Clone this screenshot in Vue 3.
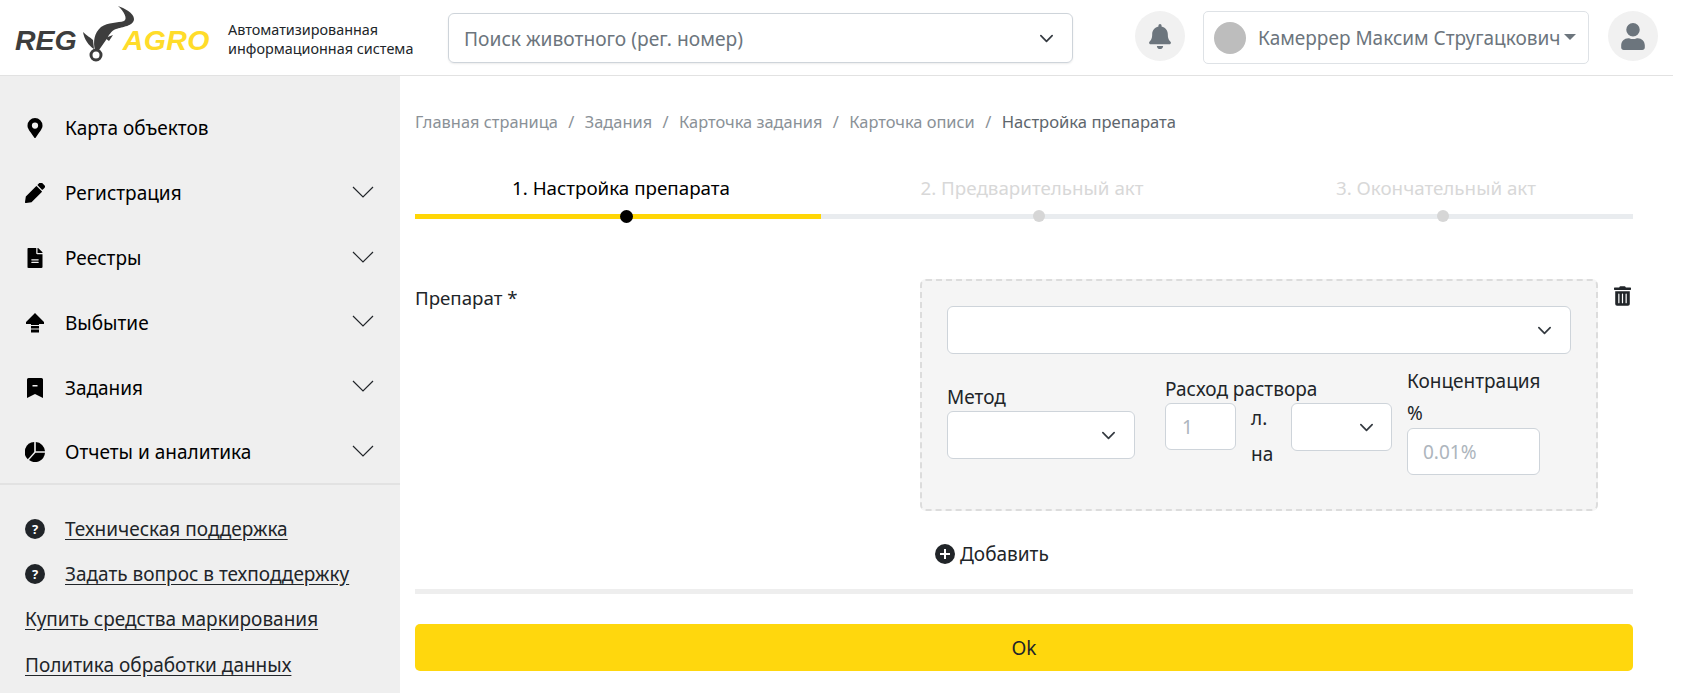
<script setup>
const menu = [
  { title: 'Карта объектов', icon: 'pin', arrow: false },
  { title: 'Регистрация', icon: 'pencil', arrow: true },
  { title: 'Реестры', icon: 'file', arrow: true },
  { title: 'Выбытие', icon: 'up', arrow: true },
  { title: 'Задания', icon: 'mark', arrow: true },
  { title: 'Отчеты и аналитика', icon: 'pie', arrow: true },
]
const crumbs = ['Главная страница', 'Задания', 'Карточка задания', 'Карточка описи']
const steps = ['1. Настройка препарата', '2. Предварительный акт', '3. Окончательный акт']
</script>

<template>
  <div class="page">
    <header class="top">
      <div class="logo">
        <span class="logo-reg">REG</span>
        <svg class="logo-bull" viewBox="0 0 60 70" width="60" height="70">
          <path d="M40 6C46 8 56 13 56 19C56 26 44 27 38 29C33 31 31 35 28 40L21 50L17 50C15 42 16 33 23 27C30 22 40 23 46 21C50 19 46 11 40 6z" fill="#3d3d3d"/>
          <path d="M5 32C9 36 12 37 15 40L16 49C11 46 6 39 5 32z" fill="#3d3d3d"/>
          <path d="M27 38L35 35L31 41z" fill="#3d3d3d"/>
          <circle cx="18" cy="55" r="5" fill="#fff" stroke="#3d3d3d" stroke-width="3"/>
        </svg>
        <span class="logo-agro">AGRO</span>
      </div>
      <div class="logo-text">Автоматизированная<br>информационная система</div>
      <div class="search">
        <span>Поиск животного (рег. номер)</span>
        <svg class="chev" viewBox="0 0 16 16" width="15" height="15"><path d="M2 5l6 6 6-6" fill="none" stroke="#343a40" stroke-width="1.800" stroke-linecap="round" stroke-linejoin="round"/></svg>
      </div>
      <div class="round bell">
        <svg viewBox="0 0 448 512" width="22" height="25"><path fill="#6c757d" d="M224 512c35 0 64-29 64-64H160c0 35 29 64 64 64zm215-150c-19-21-55-52-55-154 0-78-54-140-128-155V32a32 32 0 1 0-64 0v21C118 68 64 130 64 208c0 102-36 133-55 154-6 6-9 14-9 22 0 16 13 32 32 32h384c19 0 32-16 32-32 0-8-3-16-9-22z"/></svg>
      </div>
      <div class="user">
        <span class="avatar"></span>
        <span class="user-name">Камеррер Максим Стругацкович</span>
        <span class="caret"></span>
      </div>
      <div class="round profile">
        <svg viewBox="0 0 448 512" width="24" height="27"><path fill="#6c757d" d="M224 256a128 128 0 1 0 0-256 128 128 0 0 0 0 256zm90 32h-17a174 174 0 0 1-146 0h-17C60 288 0 348 0 422v42c0 27 21 48 48 48h352c27 0 48-21 48-48v-42c0-74-60-134-134-134z"/></svg>
      </div>
    </header>

    <div class="body">
      <aside class="side">
        <nav class="menu">
          <div v-for="m in menu" :key="m.title" class="menu-item">
            <span class="menu-ico">
              <svg v-if="m.icon === 'pin'" viewBox="0 0 384 512" width="16" height="20"><path d="M172 502C27 291 0 262 0 192a192 192 0 0 1 384 0c0 70-27 99-172 310a24 24 0 0 1-40 0zm20-230a80 80 0 1 0 0-160 80 80 0 0 0 0 160z"/></svg>
              <svg v-else-if="m.icon === 'pencil'" viewBox="0 0 512 512" width="20" height="20"><path d="M497 125l-46 46a12 12 0 0 1-17 0L323 60a12 12 0 0 1 0-17l46-46a48 48 0 0 1 68 0l60 60a48 48 0 0 1 0 68zM284 82L21 345 0 484a24 24 0 0 0 28 28l139-21 263-263a12 12 0 0 0 0-17L301 82a12 12 0 0 0-17 0z"/></svg>
              <svg v-else-if="m.icon === 'file'" viewBox="0 0 384 512" width="16" height="20"><path d="M224 136V0H24C11 0 0 11 0 24v464c0 13 11 24 24 24h336c13 0 24-11 24-24V160H248c-13 0-24-11-24-24zm64 236c0 7-5 12-12 12H108c-7 0-12-5-12-12v-8c0-7 5-12 12-12h168c7 0 12 5 12 12zm0-64c0 7-5 12-12 12H108c-7 0-12-5-12-12v-8c0-7 5-12 12-12h168c7 0 12 5 12 12zm96-186v6H256V0h6c6 0 12 3 17 7l98 98c4 4 7 10 7 16z"/></svg>
              <svg v-else-if="m.icon === 'up'" viewBox="0 0 20 20" width="20" height="20"><path d="M10 0l9 9v2h-5v1H6v-1H1V9z"/><rect x="6" y="13" width="8" height="2.500"/><rect x="6" y="16.500" width="8" height="3"/></svg>
              <svg v-else-if="m.icon === 'mark'" viewBox="0 0 16 20" width="16" height="20"><path fill-rule="evenodd" d="M1.500 0h13a1.500 1.500 0 0 1 1.500 1.500V20l-8-4-8 4V1.500A1.500 1.500 0 0 1 1.500 0zM5.500 7v1.600h5V7z"/></svg>
              <svg v-else viewBox="0 0 20 20" width="20" height="20"><path d="M9.200 0v10l-6.400 7.200A10 10 0 0 1 9.200 0z"/><path d="M10.800 0A10 10 0 0 1 20 9.200h-9.200z"/><path d="M10.500 10.800H20A10 10 0 0 1 4 18z"/></svg>
            </span>
            <span class="menu-title">{{ m.title }}</span>
            <svg v-if="m.arrow" class="menu-arrow" viewBox="0 0 22 12" width="22" height="12"><path d="M1 1l10 10L21 1" fill="none" stroke="#212529" stroke-width="1.200"/></svg>
          </div>
        </nav>
        <div class="links">
          <div class="link-row">
            <svg viewBox="0 0 20 20" width="20" height="20"><circle cx="10" cy="10" r="10" fill="#212529"/><text x="10" y="14.500" class="q">?</text></svg>
            <a>Техническая поддержка</a>
          </div>
          <div class="link-row">
            <svg viewBox="0 0 20 20" width="20" height="20"><circle cx="10" cy="10" r="10" fill="#212529"/><text x="10" y="14.500" class="q">?</text></svg>
            <a>Задать вопрос в техподдержку</a>
          </div>
          <div class="link-row plain"><a>Купить средства маркирования</a></div>
          <div class="link-row plain"><a>Политика обработки данных</a></div>
        </div>
      </aside>

      <main class="main">
        <div class="crumbs">
          <template v-for="c in crumbs" :key="c">
            <span>{{ c }}</span><span class="sep">/</span>
          </template>
          <span class="crumb-last">Настройка препарата</span>
        </div>

        <div class="steps">
          <div v-for="(s, i) in steps" :key="s" class="step" :class="{ active: i === 0 }">
            <div class="step-title">{{ s }}</div>
            <div class="step-bar"><span class="step-dot"></span></div>
          </div>
        </div>

        <div class="form-row">
          <div class="form-label">Препарат *</div>
          <div class="form-right">
            <div class="panel-wrap">
              <div class="panel">
                <div class="select wide">
                  <svg class="chev" viewBox="0 0 16 16" width="15" height="15"><path d="M2 5l6 6 6-6" fill="none" stroke="#343a40" stroke-width="1.800" stroke-linecap="round" stroke-linejoin="round"/></svg>
                </div>
                <div class="fields">
                  <div class="f-method">
                    <div class="f-label">Метод</div>
                    <div class="select">
                      <svg class="chev" viewBox="0 0 16 16" width="15" height="15"><path d="M2 5l6 6 6-6" fill="none" stroke="#343a40" stroke-width="1.800" stroke-linecap="round" stroke-linejoin="round"/></svg>
                    </div>
                  </div>
                  <div class="f-rate">
                    <div class="f-label">Расход раствора</div>
                    <div class="rate-row">
                      <div class="input rate-input">1</div>
                      <div class="rate-unit">л.<br>на</div>
                      <div class="select rate-select">
                        <svg class="chev" viewBox="0 0 16 16" width="15" height="15"><path d="M2 5l6 6 6-6" fill="none" stroke="#343a40" stroke-width="1.800" stroke-linecap="round" stroke-linejoin="round"/></svg>
                      </div>
                    </div>
                  </div>
                  <div class="f-conc">
                    <div class="f-label">Концентрация<br>%</div>
                    <div class="input conc-input">0.01%</div>
                  </div>
                </div>
              </div>
              <svg class="trash" viewBox="0 0 448 512" width="17" height="20"><path fill="#212529" d="M32 464a48 48 0 0 0 48 48h288a48 48 0 0 0 48-48V128H32zm272-256a16 16 0 0 1 32 0v224a16 16 0 0 1-32 0zm-96 0a16 16 0 0 1 32 0v224a16 16 0 0 1-32 0zm-96 0a16 16 0 0 1 32 0v224a16 16 0 0 1-32 0zM432 32H312l-9-19a24 24 0 0 0-22-13H167a24 24 0 0 0-21 13l-9 19H16A16 16 0 0 0 0 48v32a16 16 0 0 0 16 16h416a16 16 0 0 0 16-16V48a16 16 0 0 0-16-16z"/></svg>
            </div>
            <div class="add">
              <svg viewBox="0 0 20 20" width="20" height="20"><circle cx="10" cy="10" r="10" fill="#212529"/><path d="M10 5v10M5 10h10" stroke="#fff" stroke-width="2"/></svg>
              <span>Добавить</span>
            </div>
          </div>
        </div>

        <div class="divider"></div>
        <button class="ok">Ok</button>
      </main>
    </div>
  </div>
</template>

<style>
html, body { margin: 0; background: #fff; overflow: hidden; }
</style>

<style scoped>
.page {
  width: 1693px;
  height: 693px;
  font-family: "Noto Sans", "Open Sans", sans-serif;
  color: #212529;
  font-size: 19px;
  overflow: hidden;
}
.top {
  height: 75px;
  width: 1673px;
  border-bottom: 1px solid #e2e2e2;
  display: flex;
  align-items: flex-start;
  box-sizing: content-box;
}
.logo {
  width: 209px;
  height: 75px;
  display: flex;
  align-items: center;
  padding: 5px 0 0 15px;
  box-sizing: border-box;
  font-family: "Liberation Sans", sans-serif;
  font-weight: 700;
  font-style: italic;
  font-size: 28.500px;
  position: relative;
  flex: none;
}
.logo-reg { color: #3d3d3d; }
.logo-agro { color: #ffdc2a; margin-left: 46px; letter-spacing: 0.4px; }
.logo-bull { position: absolute; left: 78px; top: 0; }
.logo-text {
  width: 220px;
  padding-top: 20px;
  margin-left: 19px;
  font-size: 14.400px;
  line-height: 19px;
  flex: none;
}
.search {
  width: 625px;
  height: 50px;
  margin-top: 13px;
  border: 1px solid #ced4da;
  border-radius: 6px;
  box-sizing: border-box;
  display: flex;
  align-items: center;
  justify-content: space-between;
  padding: 0 18px 0 15px;
  color: #6c757d;
  font-size: 19.200px;
  box-shadow: 0 1px 2px rgba(0, 0, 0, .08);
  flex: none;
}
.round {
  width: 50px;
  height: 50px;
  border-radius: 50%;
  background: #f1f1f1;
  margin-top: 11px;
  display: flex;
  align-items: center;
  justify-content: center;
  flex: none;
}
.bell { margin-left: 62px; }
.user {
  width: 386px;
  height: 53px;
  margin-top: 11px;
  margin-left: 18px;
  border: 1px solid #dee2e6;
  border-radius: 5px;
  box-sizing: border-box;
  display: flex;
  align-items: center;
  padding-left: 10px;
  color: #6c757d;
  flex: none;
}
.avatar {
  width: 32px;
  height: 32px;
  border-radius: 50%;
  background: #bdbdbd;
  flex: none;
}
.user-name { margin-left: 12px; white-space: nowrap; }
.caret {
  margin-left: 4px;
  margin-bottom: 2px;
  border-left: 6px solid transparent;
  border-right: 6px solid transparent;
  border-top: 6px solid #6c757d;
}
.profile { margin-left: 19px; }

.body { display: flex; height: 617px; }
.side {
  width: 400px;
  flex: none;
  background: #efefef;
  color: #000;
  box-sizing: border-box;
}
.menu { padding-top: 20px; border-bottom: 2px solid #e2e2e2; height: 409px; box-sizing: border-box; }
.menu-item {
  height: 64.800px;
  display: flex;
  align-items: center;
  padding-left: 25px;
  position: relative;
}
.menu-ico { width: 20px; display: flex; justify-content: center; flex: none; }
.menu-title { margin-left: 20px; }
.menu-arrow { position: absolute; right: 26px; top: 25px; }
.links { padding: 21px 0 0 25px; color: #212529; }
.link-row { height: 45.300px; display: flex; align-items: center; gap: 20px; }
.link-row a { text-decoration: underline; text-underline-offset: 3px; }
.q { font: 700 13px "Noto Sans", sans-serif; fill: #fff; text-anchor: middle; }

.main {
  width: 1218px;
  margin-left: 15px;
  flex: none;
}
.crumbs {
  margin-top: 34px;
  display: flex;
  color: #8a9197;
  font-size: 16.400px;
  line-height: 24px;
}
.sep { margin: 0 10.400px; }
.crumb-last { color: #5e666d; font-size: 16.600px; }
.steps {
  display: grid;
  grid-template-columns: repeat(3, 1fr);
  margin-top: 42px;
}
.step-title {
  text-align: center;
  color: #d8d8d8;
  font-size: 18.800px;
  line-height: 24px;
  padding-left: 12px;
}
.step:nth-child(1) .step-title { padding-left: 6px; }
.step:nth-child(2) .step-title { padding-left: 16px; }
.active .step-title { color: #000; }
.step-bar {
  height: 5px;
  margin-top: 14px;
  background: #e9ecef;
  position: relative;
}
.active .step-bar { background: #ffd606; }
.step-dot {
  position: absolute;
  left: 216px;
  top: -4px;
  width: 12px;
  height: 12px;
  border-radius: 50%;
  background: #d6d6d6;
  margin-left: -6px;
}
.step:nth-child(1) .step-dot { left: 211px; }
.step:nth-child(2) .step-dot { left: 218px; }
.active .step-dot { background: #000; width: 13px; height: 13px; }

.form-row {
  display: flex;
  margin-top: 60px;
}
.form-label { width: 505px; padding-top: 6px; line-height: 26px; font-size: 18.700px; }
.form-right { flex: 1; font-size: 19px; }
.panel-wrap { display: flex; align-items: flex-start; }
.panel {
  width: 678px;
  height: 232px;
  box-sizing: border-box;
  background: #f5f5f5;
  border: 2px dashed #dcdcdc;
  border-radius: 6px;
  padding: 25px 25px 0;
  flex: none;
}
.trash { margin-left: 16px; margin-top: 7px; }
.select, .input {
  background: #fff;
  border: 1px solid #ced4da;
  border-radius: 6px;
  box-sizing: border-box;
  height: 48px;
  display: flex;
  align-items: center;
  justify-content: flex-end;
  padding-right: 18px;
}
.wide { width: 624px; }
.fields { display: flex; margin-top: 26px; }
.f-label { line-height: 27px; white-space: nowrap; }
.f-method { width: 188px; padding-top: 4px; }
.f-rate { width: 227px; margin-left: 30px; margin-top: -4px; }
.rate-row { display: flex; }
.rate-input { width: 71px; height: 47px; justify-content: flex-start; padding-left: 16px; color: #adb5bd; }
.rate-unit { width: 55px; padding-left: 15px; box-sizing: border-box; line-height: 36px; margin-top: -3px; }
.rate-select { width: 101px; padding-right: 17px; }
.f-conc { width: 133px; margin-left: 15px; margin-top: -15px; }
.f-conc .f-label { line-height: 32px; }
.conc-input { height: 47px; justify-content: flex-start; padding-left: 15px; color: #adb5bd; margin-top: -1px; }
.add {
  display: flex;
  align-items: center;
  gap: 5px;
  margin-left: 15px;
  margin-top: 30px;
  line-height: 26px;
}
.divider { height: 5px; background: #eeeeee; margin-top: 22px; }
.ok {
  display: block;
  width: 100%;
  height: 47px;
  margin-top: 30px;
  border: 0;
  border-radius: 5px;
  background: #ffd70d;
  font: inherit;
  color: #212529;
}
</style>
